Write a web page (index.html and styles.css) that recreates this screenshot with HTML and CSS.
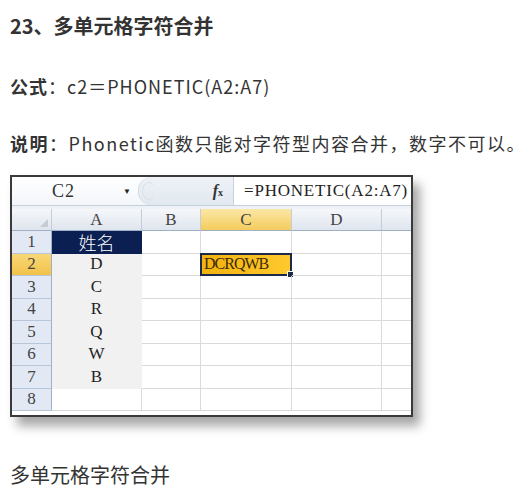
FILE: index.html
```html
<!DOCTYPE html>
<html lang="zh-CN">
<head>
    <meta charset="utf-8">
    <title>多单元格字符合并</title>
    <link rel="stylesheet" href="styles.css">
</head>
<body>
<div class="article">
    <h2 class="title">23、多单元格字符合并</h2>
    <p class="line formula-line"><b>公式</b>：c2＝PHONETIC(A2:A7)</p>
    <p class="line desc-line"><b>说明</b>：Phonetic函数只能对字符型内容合并，数字不可以。</p>

    <div class="shot">
        <div class="sheet">
            <div class="fbar">
                <div class="namebox">
                    <span class="name">C2</span>
                    <span class="drop">&#9660;</span>
                </div>
                <div class="fx-area">
                    <span class="ring"></span>
                    <span class="fx"><i>f</i><small>x</small></span>
                </div>
                <div class="finput">=PHONETIC(A2:A7)</div>
            </div>
            <div class="band"></div>
            <div class="grid">
                <div class="hd corner"><span class="tri"></span></div>
                <div class="hd col">A</div>
                <div class="hd col">B</div>
                <div class="hd col sel">C</div>
                <div class="hd col">D</div>
                <div class="hd col last"></div>

                <div class="rh">1</div>
                <div class="c a1">姓名</div>
                <div class="c"></div><div class="c"></div><div class="c"></div><div class="c last"></div>

                <div class="rh sel">2</div>
                <div class="c grey">D</div>
                <div class="c"></div>
                <div class="c active">DCRQWB<span class="handle"></span></div>
                <div class="c"></div><div class="c last"></div>

                <div class="rh">3</div>
                <div class="c grey">C</div>
                <div class="c"></div><div class="c"></div><div class="c"></div><div class="c last"></div>

                <div class="rh">4</div>
                <div class="c grey">R</div>
                <div class="c"></div><div class="c"></div><div class="c"></div><div class="c last"></div>

                <div class="rh">5</div>
                <div class="c grey">Q</div>
                <div class="c"></div><div class="c"></div><div class="c"></div><div class="c last"></div>

                <div class="rh">6</div>
                <div class="c grey">W</div>
                <div class="c"></div><div class="c"></div><div class="c"></div><div class="c last"></div>

                <div class="rh">7</div>
                <div class="c grey">B</div>
                <div class="c"></div><div class="c"></div><div class="c"></div><div class="c last"></div>

                <div class="rh">8</div>
                <div class="c"></div>
                <div class="c"></div><div class="c"></div><div class="c"></div><div class="c last"></div>
            </div>
        </div>
    </div>

    <p class="caption">多单元格字符合并</p>
</div>
</body>
</html>
```

FILE: styles.css
```css
body {
    margin: 0;
    background: #fff;
    color: #333;
    font-family: "Noto Sans CJK SC", "Noto Sans", sans-serif;
}

.article {
    padding: 0 10px;
}

.title {
    margin: 12px 0 0;
    font-size: 20px;
    line-height: 28px;
    font-weight: bold;
    color: #333;
}

.line {
    margin: 0;
    font-size: 18px;
    line-height: 28px;
    white-space: nowrap;
}

.line b {
    font-weight: bold;
}

.formula-line {
    margin-top: 32px;
    letter-spacing: 1px;
}

.desc-line {
    margin-top: 29px;
    letter-spacing: 1.5px;
}

/* screenshot of the excel window */
.shot {
    margin-top: 18px;
    width: 420px;
    height: 264px;
}

.sheet {
    width: 399px;
    height: 238px;
    border: 2px solid #3a3a3a;
    background: #fff;
    box-shadow: 7px 9px 10px rgba(0, 0, 0, 0.35);
    font-family: "Liberation Serif", serif;
    color: #222;
}

.fbar {
    display: flex;
    height: 28px;
    background: linear-gradient(#ffffff, #f3f6fa);
    border-bottom: 1px solid #c5d0dd;
}

.namebox {
    width: 126px;
    display: flex;
    align-items: center;
    font-size: 18px;
}

.name {
    margin-left: 40px;
    letter-spacing: 1px;
    color: #333;
}

.drop {
    margin-left: 48px;
    font-size: 8px;
    color: #222;
}

.fx-area {
    width: 95px;
    display: flex;
    align-items: center;
    justify-content: space-between;
    background: linear-gradient(#eef2f7, #e2e8f0);
    border-radius: 13px 0 0 13px;
    border-left: 1px solid #d0d8e2;
    padding: 0 10px 0 3px;
    box-sizing: border-box;
}

.ring {
    width: 12px;
    height: 16px;
    border: 1px solid #d8dee6;
    border-right-color: transparent;
    border-radius: 50%;
}

.fx {
    font-family: "Liberation Serif", serif;
    font-weight: bold;
    color: #333;
    font-size: 16px;
}

.fx small {
    font-size: 10px;
}

.finput {
    flex: 1;
    background: #fff;
    border-left: 1px solid #c8d2de;
    padding-left: 10px;
    font-size: 17px;
    letter-spacing: 0.8px;
    line-height: 28px;
    color: #222;
}

.band {
    height: 3px;
    background: #eef2f7;
}

.grid {
    display: grid;
    grid-template-columns: 40px 90px 59px 91px 90px 29px;
    grid-template-rows: 22px repeat(8, 22.5px);
    font-size: 17px;
}

.hd {
    background: linear-gradient(#f5f7fa, #dfe5ee);
    border-right: 1px solid #c3ccd8;
    border-bottom: 1px solid #9fb0c4;
    display: flex;
    align-items: center;
    justify-content: center;
    color: #444;
}

.hd.sel {
    background: linear-gradient(#fbe7a6, #f4cc5c);
}

.hd.last {
    border-right: none;
}

.corner {
    position: relative;
}

.tri {
    position: absolute;
    right: 3px;
    bottom: 3px;
    width: 0;
    height: 0;
    border-left: 8px solid transparent;
    border-bottom: 8px solid #c6ccd4;
}

.rh {
    background: #e2e9f4;
    border-right: 1px solid #9fb0c4;
    border-bottom: 1px solid #b7c6d8;
    display: flex;
    align-items: center;
    justify-content: center;
    color: #444;
}

.rh.sel {
    background: linear-gradient(#f8d877, #f2c24a);
}

.c {
    border-right: 1px solid #dadada;
    border-bottom: 1px solid #dadada;
    display: flex;
    align-items: center;
    justify-content: center;
    position: relative;
}

.c.last {
    border-right: none;
}

.c.grey {
    background: #f1f1f1;
    border-color: #f1f1f1;
}

.c.a1 {
    background: #0b1f52;
    border-color: #0b1f52;
    color: #fff;
    font-family: "Noto Sans CJK SC", sans-serif;
    font-size: 18px;
    font-weight: 300;
}

.c.active {
    justify-content: flex-start;
    padding-left: 2px;
    font-size: 16px;
    letter-spacing: -1px;
    background: linear-gradient(90deg, #f2b20f, #ffc92e);
    border: 2px solid #1d2a4a;
    margin: -1px 0 0 -1px;
    color: #3b2b05;
}

.handle {
    position: absolute;
    right: -4px;
    bottom: -4px;
    width: 5px;
    height: 5px;
    background: #1d2a4a;
    border: 1px solid #fff;
}

.caption {
    margin: 22px 0 0;
    font-size: 20px;
    line-height: 28px;
    color: #333;
}
```
